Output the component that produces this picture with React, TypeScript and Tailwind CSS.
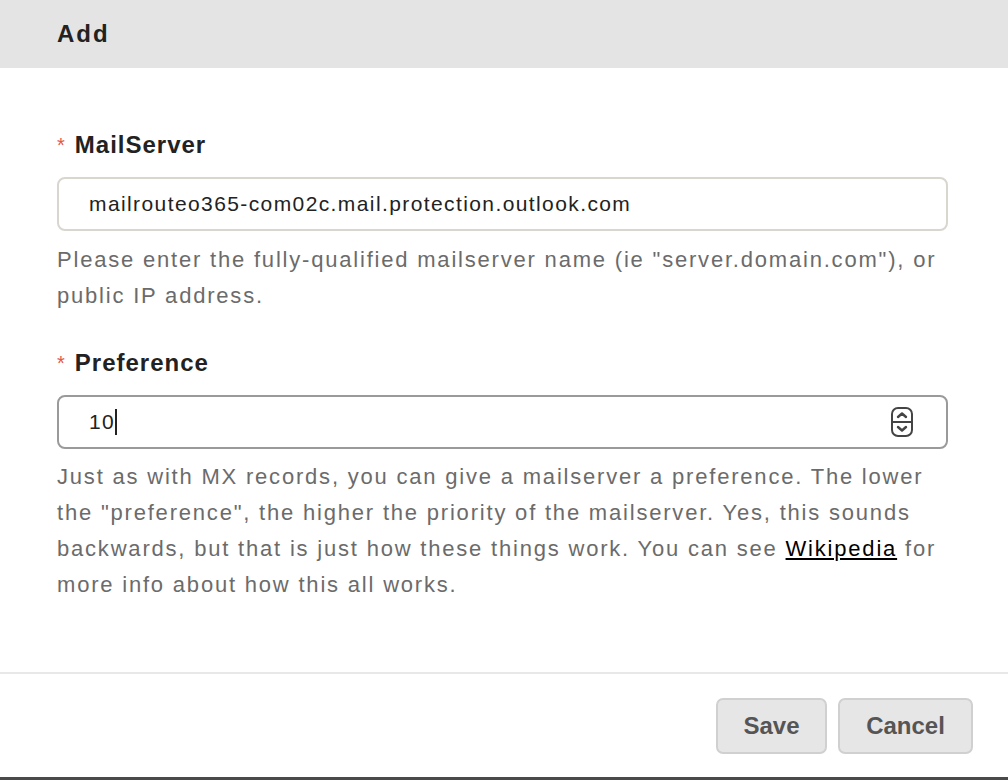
export default function App() {
  return (
    <div
      className="flex h-[780px] w-[1008px] flex-col bg-white"
      style={{ fontFamily: '"Liberation Sans", Arial, sans-serif' }}
    >
      <header className="flex h-[68px] shrink-0 items-center bg-[#e4e4e4] px-[57px]">
        <h1 className="text-[24px] font-bold tracking-[2px] text-[#222]">Add</h1>
      </header>

      <div className="flex-1 pt-[61px] pr-[58px] pl-[57px]">
        <Label text="MailServer" />
        <div className="mt-[16px] mr-[2px] flex h-[54px] items-center rounded-[8px] border-2 border-[#d8d6ce] pl-[30px] text-[21px] tracking-[1.4px] text-[#222]">
          mailrouteo365-com02c.mail.protection.outlook.com
        </div>
        <p className="mt-[11px] text-[22px] leading-[36px] tracking-[1.8px] text-[#6b6b6b]">
          Please enter the fully-qualified mailserver name (ie "server.domain.com"), or public IP
          address.
        </p>

        <div className="mt-[33px]">
          <Label text="Preference" />
        </div>
        <div className="mt-[16px] mr-[2px] flex h-[54px] items-center justify-between rounded-[8px] border-2 border-[#9a9a9a] pr-[32px] pl-[30px] text-[21px] tracking-[1.4px] text-[#222]">
          <span className="flex items-center">
            10
            <span className="inline-block h-[26px] w-[2px] bg-[#222]" />
          </span>
          <svg width="24" height="32" viewBox="0 0 24 32" fill="none" stroke="#444" strokeWidth="2">
            <rect x="2" y="2" width="20" height="28" rx="6" />
            <line x1="2" y1="16" x2="22" y2="16" />
            <path d="M8 11 L12 7.5 L16 11" strokeLinecap="round" strokeLinejoin="round" strokeWidth="2.4" />
            <path d="M8 21 L12 24.5 L16 21" strokeLinecap="round" strokeLinejoin="round" strokeWidth="2.4" />
          </svg>
        </div>
        <p className="mt-[10px] text-[22px] leading-[36px] tracking-[1.8px] text-[#6b6b6b]">
          Just as with MX records, you can give a mailserver a preference. The lower the
          "preference", the higher the priority of the mailserver. Yes, this sounds backwards, but
          that is just how these things work. You can see{" "}
          <a href="#" className="text-black underline">
            Wikipedia
          </a>{" "}
          for more info about how this all works.
        </p>
      </div>

      <footer className="flex h-[105px] shrink-0 items-start justify-end gap-[11px] border-t-2 border-[#e8e8e8] pt-[24px] pr-[35px]">
        <Button text="Save" width="w-[111px]" />
        <Button text="Cancel" width="w-[135px]" />
      </footer>
      <div className="h-[3px] shrink-0 bg-[#4a4a4a]" />
    </div>
  );
}

function Label({ text }: { text: string }) {
  return (
    <div className="flex items-center text-[24px] leading-[32px]">
      <span className="mr-[10px] text-[20px] text-[#e2574c]">*</span>
      <span className="font-bold tracking-[1px] text-[#222]">{text}</span>
    </div>
  );
}

function Button({ text, width }: { text: string; width: string }) {
  return (
    <button
      className={`h-[56px] ${width} rounded-[7px] border-2 border-[#d0d0d0] bg-[#e6e6e6] text-[24px] font-bold text-[#555]`}
    >
      {text}
    </button>
  );
}
